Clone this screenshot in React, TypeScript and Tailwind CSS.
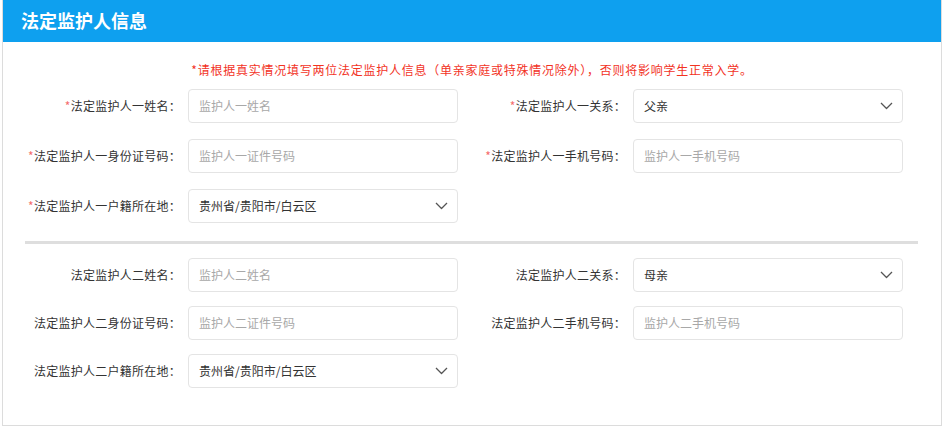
/**
 * 法定监护人信息 表单
 */

interface FieldProps {
  label: string;
  required?: boolean;
  placeholder?: string;
  value?: string;
  select?: boolean;
}

function Chevron() {
  return (
    <svg width="13" height="8" viewBox="0 0 13 8" fill="none" className="shrink-0">
      <polyline points="1,1 6.5,6.5 12,1" stroke="#555" strokeWidth="1.3" strokeLinejoin="round" />
    </svg>
  );
}

function Field({ label, required, placeholder, value, select }: FieldProps) {
  return (
    <div className="flex items-center">
      <div className="flex-1 pr-[7px] text-right text-[12px] tracking-[0.25px] text-[#333]">
        {required && <span className="text-[#f56c6c]">*</span>}
        {label}：
      </div>
      <div className="flex h-[34px] w-[270px] items-center justify-between rounded-[4px] border border-[#e4e4e4] bg-white pl-[10px] pr-[9px] text-[12px]">
        {value ? (
          <span className="text-[#333]">{value}</span>
        ) : (
          <span className="text-[#a8a8a8]">{placeholder}</span>
        )}
        {select && <Chevron />}
      </div>
    </div>
  );
}

export default function App() {
  return (
    <div
      className="h-[430px] w-[944px] bg-white"
      style={{ fontFamily: '"Noto Sans CJK SC", "Noto Sans", sans-serif' }}
    >
      <div className="ml-[2px] h-[426px] w-[940px] border border-t-0 border-[#dcdcdc]">
        {/* 标题 */}
        <div className="flex h-[42px] items-center bg-[#0ea0ef] pb-[2px] pl-[18px] text-[18px] font-bold text-white">
          法定监护人信息
        </div>

        {/* 提示 */}
        <p className="mt-[19px] text-center text-[12px] leading-[17px] tracking-[0.75px] text-[#f2331f]">
          *请根据真实情况填写两位法定监护人信息（单亲家庭或特殊情况除外），否则将影响学生正常入学。
        </p>

        {/* 监护人一 */}
        <div className="ml-[10px] mt-[11px] grid grid-cols-[445px_445px] gap-y-[16px]">
          <Field label="法定监护人一姓名" required placeholder="监护人一姓名" />
          <Field label="法定监护人一关系" required value="父亲" select />
          <Field label="法定监护人一身份证号码" required placeholder="监护人一证件号码" />
          <Field label="法定监护人一手机号码" required placeholder="监护人一手机号码" />
          <Field label="法定监护人一户籍所在地" required value="贵州省/贵阳市/白云区" select />
        </div>

        <div className="ml-[22px] mt-[18px] h-[3px] w-[893px] bg-[#dedede]" />

        {/* 监护人二 */}
        <div className="ml-[10px] mt-[14px] grid grid-cols-[445px_445px] gap-y-[14px]">
          <Field label="法定监护人二姓名" placeholder="监护人二姓名" />
          <Field label="法定监护人二关系" value="母亲" select />
          <Field label="法定监护人二身份证号码" placeholder="监护人二证件号码" />
          <Field label="法定监护人二手机号码" placeholder="监护人二手机号码" />
          <Field label="法定监护人二户籍所在地" value="贵州省/贵阳市/白云区" select />
        </div>
      </div>
    </div>
  );
}
